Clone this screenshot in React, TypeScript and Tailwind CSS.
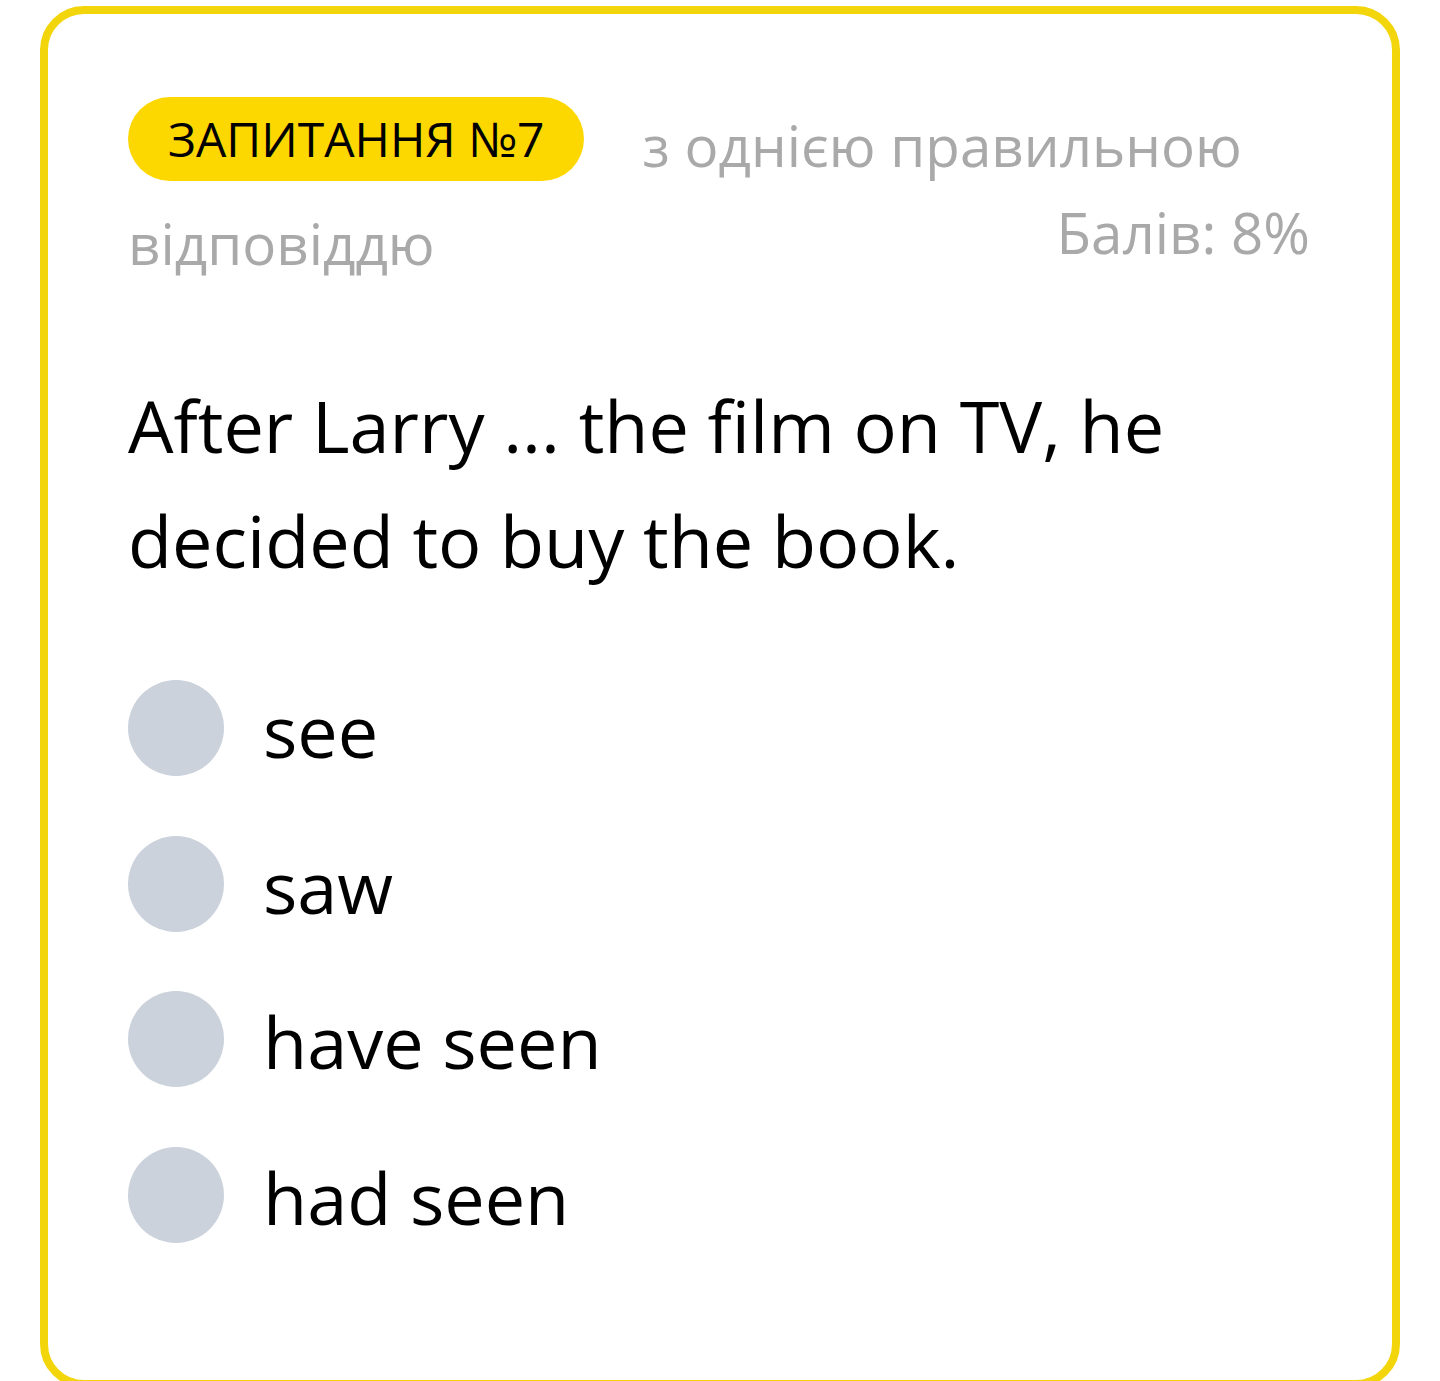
import React from 'react';

const options = ['see', 'saw', 'have seen', 'had seen'];

const App: React.FC = () => {
  return (
    <div className="min-h-screen bg-white pt-[6px] pl-[40px] pr-[40px] font-['Open_Sans',sans-serif]">
      <div className="w-[1360px] h-[1382px] border-[8px] border-[#f3d50b] rounded-[44px] bg-white pt-[83px] px-[80px]">
        {/* Header: badge + question type, score floats right */}
        <div className="text-[56.5px] leading-[98px] text-[#a9a9a9]">
          <span className="inline-block align-top h-[84px] leading-[84px] px-[40px] rounded-full bg-[#fdd700] text-[48px] text-black mr-[58px]">
            ЗАПИТАННЯ №7
          </span>
          з однією правильною відповіддю
          <span className="float-right leading-[75px] mr-[2px]">Балів: 8%</span>
        </div>

        {/* Question */}
        <p className="clear-both mt-[75px] text-[72px] leading-[115px] text-black">
          After Larry ... the film on TV, he decided to buy the book.
        </p>

        {/* Options */}
        <div className="mt-[82px] flex flex-col gap-[59.5px]">
          {options.map((o) => (
            <label key={o} className="flex items-start h-[96px]">
              <span className="w-[96px] h-[96px] rounded-full bg-[#cbd2db] shrink-0" />
              <span className="ml-[39px] text-[72px] leading-[100px] text-black">{o}</span>
            </label>
          ))}
        </div>
      </div>
    </div>
  );
};

export default App;
